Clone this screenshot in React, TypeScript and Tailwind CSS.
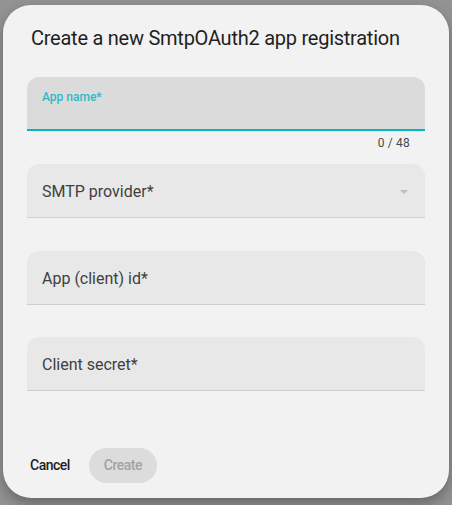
const fieldText = "font-['Roboto',sans-serif]";

interface FieldProps {
    label: string;
    select?: boolean;
}

const FilledField = function (props: FieldProps) {
    return (
        <div className="relative flex h-[54px] items-center rounded-t-[12px] border-b border-[#cfcfcf] bg-[#e8e8e8] pl-[15px] pr-[16px] pt-[2px]">
            <span className="text-[16px] leading-[20px] tracking-[0px] text-[#3f3f3f]">{props.label}</span>
            {props.select && (
                <span className="ml-auto mr-[1px] h-0 w-0 border-x-[4px] border-t-[4px] border-x-transparent border-t-[#bdbdbd]" />
            )}
        </div>
    );
};

export default function App() {
    return (
        <div className={`h-[505px] w-[452px] overflow-hidden bg-[#939393] pl-[3px] pt-[5px] ${fieldText}`}>
            <div className="flex h-[493px] w-[446px] flex-col rounded-[28px] bg-[#f2f2f2] shadow-[0_6px_14px_rgba(0,0,0,0.3)]">
                <h2 className="pl-[28px] pt-[21px] text-[20px] leading-[24px] tracking-[-0.25px] text-[#1f1f1f]">
                    Create a new SmtpOAuth2 app registration
                </h2>

                <div className="mt-[27px] flex flex-col px-[24px]">
                    <div className="h-[54px] rounded-t-[12px] border-b-2 border-[#08b3c2] bg-[#dbdbdb] pl-[15px] pt-[7px]">
                        <span className="text-[12px] font-medium leading-[16px] text-[#2fb9c6]">App name*</span>
                    </div>
                    <div className="mb-[13px] mt-[4px] flex justify-end pr-[15px] text-[12px] leading-[16px] tracking-[0.2px] text-[#4a4a4a]">
                        0 / 48
                    </div>

                    <FilledField label="SMTP provider*" select />
                    <div className="mt-[33px]">
                        <FilledField label="App (client) id*" />
                    </div>
                    <div className="mt-[32px]">
                        <FilledField label="Client secret*" />
                    </div>
                </div>

                <div className="mt-auto flex items-center gap-[4px] pb-[15px] pl-[12px]">
                    <button className="h-[35px] rounded-full px-[15px] text-[14px] font-medium tracking-[-0.5px] text-[#1f1f1f]">
                        Cancel
                    </button>
                    <button
                        disabled
                        className="h-[35px] rounded-full bg-[#dcdcdc] px-[15px] text-[14px] font-medium tracking-[-0.5px] text-[#a3a3a3]"
                    >
                        Create
                    </button>
                </div>
            </div>
        </div>
    );
}
